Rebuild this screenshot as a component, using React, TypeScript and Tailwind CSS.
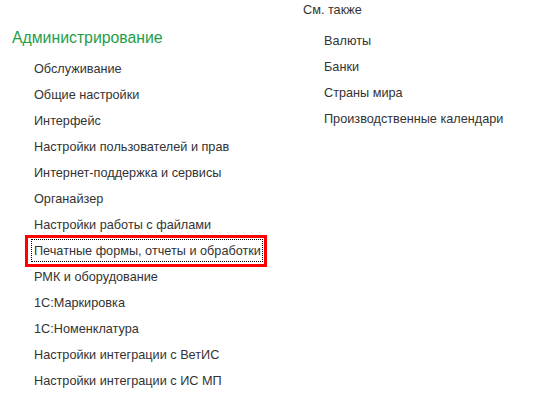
import React from "react";

const left = [
  "Обслуживание",
  "Общие настройки",
  "Интерфейс",
  "Настройки пользователей и прав",
  "Интернет-поддержка и сервисы",
  "Органайзер",
  "Настройки работы с файлами",
  "Печатные формы, отчеты и обработки",
  "РМК и оборудование",
  "1С:Маркировка",
  "1С:Номенклатура",
  "Настройки интеграции с ВетИС",
  "Настройки интеграции с ИС МП",
];

const right = ["Валюты", "Банки", "Страны мира", "Производственные календари"];

export default function App() {
  return (
    <div
      className="w-[547px] h-[406px] bg-white flex overflow-hidden text-[#333333]"
      style={{ fontFamily: '"Liberation Sans", Arial, sans-serif' }}
    >
      <div className="w-[303px] shrink-0 pl-[12px] pt-[28px]">
        <div className="text-[15.8px] leading-[20px] text-[#1e9e4a] whitespace-nowrap">Администрирование</div>
        <div className="mt-[8px] pl-[22px]">
          {left.map((t, i) => (
            <div key={t} className="relative h-[26px] text-[12.7px] leading-[26px] whitespace-nowrap">
              {i === 7 && (
                <>
                  <div className="absolute left-[-9px] top-[-3px] w-[242px] h-[32px] border-[3px] border-[#ff0000]" />
                  <div className="absolute left-[-3px] top-[1px] w-[232px] h-[23px] border border-dotted border-black" />
                </>
              )}
              <span className="relative">{t}</span>
            </div>
          ))}
        </div>
      </div>
      <div className="flex-1 min-w-0 pt-[1px]">
        <div className="text-[12.7px] leading-[18px] text-[#333333] whitespace-nowrap">См. также</div>
        <div className="mt-[9px] pl-[21px]">
          {right.map((t) => (
            <div key={t} className="h-[26px] text-[12.7px] leading-[26px] whitespace-nowrap">
              {t}
            </div>
          ))}
        </div>
      </div>
    </div>
  );
}
